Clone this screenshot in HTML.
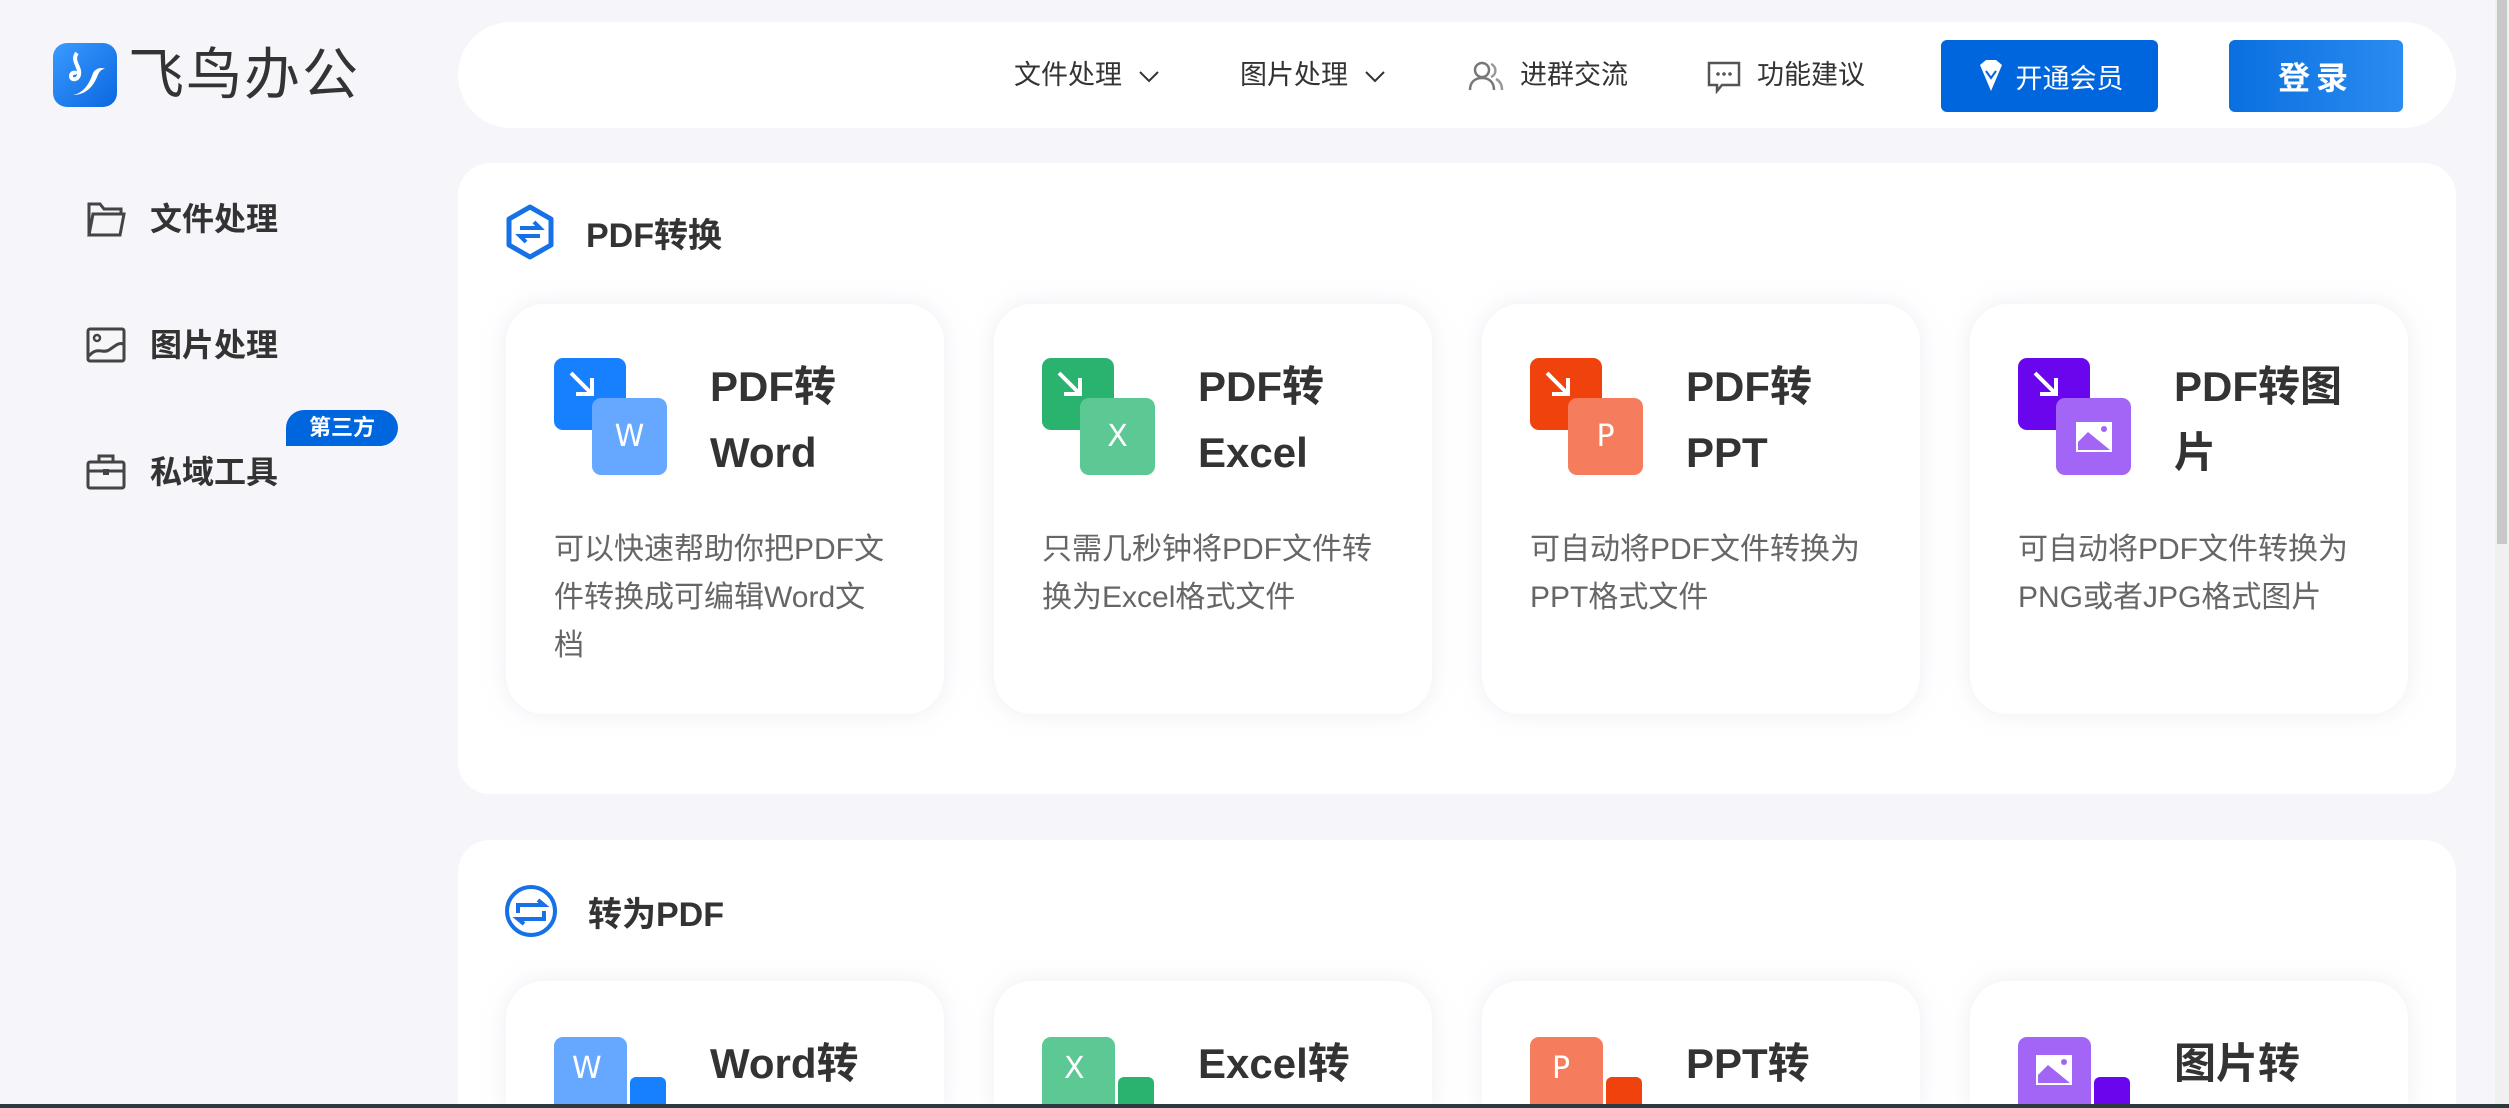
<!DOCTYPE html>
<html><head><meta charset="utf-8"><style>
*{margin:0;padding:0;box-sizing:border-box}
html,body{width:2509px;height:1108px;overflow:hidden}
body{background:#f5f5fa;font-family:"Liberation Sans","Noto Sans CJK SC",sans-serif;color:#333;position:relative}
.abs{position:absolute}
.hdr{left:458px;top:22px;width:1998px;height:106px;background:#fff;border-radius:53px}
.nav{top:55px;font-size:27px;color:#333;line-height:40px;white-space:nowrap}
.btn{top:40px;height:72px;border-radius:6px;color:#fff;font-size:27px;display:flex;align-items:center;justify-content:center}
.side{left:86px;font-size:32px;font-weight:bold;display:flex;align-items:center;line-height:40px}
.side svg{margin-right:24px}
.sec{left:458px;width:1998px;background:#fff;border-radius:32px}
.st{font-size:34px;font-weight:bold;display:flex;align-items:center}
.card{width:438px;height:410px;background:#fff;border-radius:38px;box-shadow:0 0 24px rgba(200,205,220,.35)}
.ic{position:absolute;left:48px;top:54px;width:115px;height:120px}
.ic .b{position:absolute;left:0;top:0;width:72px;height:72px;border-radius:9px}
.ic .f{position:absolute;left:38px;top:40px;width:75px;height:77px;border-radius:9px;color:#fff;font-size:30px;display:flex;align-items:center;justify-content:center;font-family:"DejaVu Sans",sans-serif}
.ic .b svg{position:absolute;left:14px;top:12px}
.ct{position:absolute;left:204px;top:50px;font-size:42px;font-weight:bold;line-height:66px;color:#333}
.cd{position:absolute;left:48px;top:222px;width:380px;font-size:30px;line-height:48px;color:#666;white-space:nowrap}
</style></head><body>
<div class="abs" style="left:53px;top:43px;width:64px;height:64px;border-radius:14px;background:linear-gradient(135deg,#3a9bff,#0a66e0)">
<svg width="64" height="64" viewBox="0 0 64 64"><path d="M24 10c-6 8 4 14 2 22-1 5-8 6-8 1 0-4 5-4 6-2" fill="none" stroke="#fff" stroke-width="4"/><path d="M20 52c10-2 16-10 20-22 3-5 8-6 12-4-4 0-6 3-8 8-4 10-12 18-24 18z" fill="#fff"/></svg></div>
<div class="abs" style="left:128px;top:40px;font-size:56px;color:#333;line-height:70px;letter-spacing:2px">飞鸟办公</div>
<div class="abs hdr"></div>
<div class="abs nav" style="left:1014px">文件处理 <svg width="22" height="14" viewBox="0 0 22 14" style="margin-left:8px"><path d="M2 2l9 9 9-9" fill="none" stroke="#333" stroke-width="2"/></svg></div>
<div class="abs nav" style="left:1240px">图片处理 <svg width="22" height="14" viewBox="0 0 22 14" style="margin-left:8px"><path d="M2 2l9 9 9-9" fill="none" stroke="#333" stroke-width="2"/></svg></div>
<svg class="abs" style="left:1466px;top:60px" width="40" height="32" viewBox="0 0 40 32"><circle cx="16" cy="10" r="7" fill="none" stroke="#777" stroke-width="2.5"/><path d="M4 30c0-8 5-12 12-12s12 4 12 12" fill="none" stroke="#777" stroke-width="2.5"/><path d="M25 4a7 7 0 0 1 0 13M30 19c4 2 6 6 6 11" fill="none" stroke="#999" stroke-width="2.5"/></svg>
<div class="abs nav" style="left:1520px">进群交流</div>
<svg class="abs" style="left:1706px;top:60px" width="36" height="34" viewBox="0 0 36 34"><path d="M3 3h30v22H16l-5 6v-6H3z" fill="none" stroke="#555" stroke-width="2.5"/><circle cx="12" cy="14" r="1.8" fill="#555"/><circle cx="18" cy="14" r="1.8" fill="#555"/><circle cx="24" cy="14" r="1.8" fill="#555"/></svg>
<div class="abs nav" style="left:1757px">功能建议</div>
<div class="abs btn" style="left:1941px;width:217px;background:#0066dd"><svg width="30" height="34" viewBox="0 0 30 34" style="margin-right:10px"><path d="M4 6l6-5h10l6 5-11 26z" fill="#fff"/><path d="M10 12l5 7 5-7" fill="none" stroke="#0066dd" stroke-width="2"/></svg>开通会员</div>
<div class="abs btn" style="left:2229px;width:174px;background:linear-gradient(90deg,#0a6fe0,#2a8cf0);font-size:32px;font-weight:bold;letter-spacing:6px">登录</div>
<div class="abs" style="left:2495px;top:0;width:14px;height:1108px;background:#f0f0f0"></div>
<div class="abs" style="left:2497px;top:0;width:10px;height:544px;background:#c8c8c8"></div>
<div class="abs side" style="top:199px"><svg width="40" height="38" viewBox="0 0 40 38"><path d="M3 35V4h11l4 5h17v5M3 35l4-21h31l-4 21z" fill="none" stroke="#444" stroke-width="3"/></svg>文件处理</div>
<div class="abs side" style="top:325px"><svg width="40" height="38" viewBox="0 0 40 38"><rect x="2" y="3" width="36" height="32" rx="2" fill="none" stroke="#444" stroke-width="3"/><circle cx="11" cy="12" r="3" fill="none" stroke="#444" stroke-width="2.5"/><path d="M3 30c8-10 14-2 20-6s10-8 14-6" fill="none" stroke="#444" stroke-width="3"/></svg>图片处理</div>
<div class="abs side" style="top:452px"><svg width="40" height="38" viewBox="0 0 40 38"><rect x="2" y="9" width="36" height="26" rx="2" fill="none" stroke="#444" stroke-width="3"/><path d="M13 9V3h14v6M2 18h36" fill="none" stroke="#444" stroke-width="3"/><rect x="17" y="16" width="6" height="6" fill="#444"/></svg>私域工具</div>
<div class="abs" style="left:286px;top:410px;width:112px;height:36px;background:#0066dd;border-radius:18px 18px 18px 0;color:#fff;font-size:22px;font-weight:bold;text-align:center;line-height:36px">第三方</div>
<div class="abs sec" style="top:163px;height:631px"></div>
<div class="abs st" style="left:504px;top:204px"><svg width="52" height="56" viewBox="0 0 52 56" style="margin-right:30px"><path d="M26 3l21 12v26L26 53 5 41V15z" fill="none" stroke="#1670e6" stroke-width="5" stroke-linejoin="round"/><path d="M16 24h20l-6-6M36 32H16l6 6" fill="none" stroke="#1670e6" stroke-width="4"/></svg>PDF转换</div>
<div class="abs card" style="left:506px;top:304px">
<div class="ic"><div class="b" style="background:#1780ff"><svg width="28" height="28" viewBox="0 0 28 28"><path d="M3 3l20 20M8 24h16V8" fill="none" stroke="#fff" stroke-width="4"/></svg></div><div class="f" style="background:#66a8ff">W</div></div>
<div class="ct">PDF转<br>Word</div><div class="cd">可以快速帮助你把PDF文<br>件转换成可编辑Word文<br>档</div></div>
<div class="abs card" style="left:994px;top:304px">
<div class="ic"><div class="b" style="background:#2ab26f"><svg width="28" height="28" viewBox="0 0 28 28"><path d="M3 3l20 20M8 24h16V8" fill="none" stroke="#fff" stroke-width="4"/></svg></div><div class="f" style="background:#5cc894">X</div></div>
<div class="ct">PDF转<br>Excel</div><div class="cd">只需几秒钟将PDF文件转<br>换为Excel格式文件</div></div>
<div class="abs card" style="left:1482px;top:304px">
<div class="ic"><div class="b" style="background:#f0420c"><svg width="28" height="28" viewBox="0 0 28 28"><path d="M3 3l20 20M8 24h16V8" fill="none" stroke="#fff" stroke-width="4"/></svg></div><div class="f" style="background:#f57d5e">P</div></div>
<div class="ct">PDF转<br>PPT</div><div class="cd">可自动将PDF文件转换为<br>PPT格式文件</div></div>
<div class="abs card" style="left:1970px;top:304px">
<div class="ic"><div class="b" style="background:#6a06ee"><svg width="28" height="28" viewBox="0 0 28 28"><path d="M3 3l20 20M8 24h16V8" fill="none" stroke="#fff" stroke-width="4"/></svg></div><div class="f" style="background:#a265f5"><svg width="40" height="34" viewBox="0 0 40 34"><path d="M2 2h36v30H2z" fill="#fff"/><path d="M4 22l10-10 22 18H4z" fill="#a265f5"/><circle cx="30" cy="9" r="3" fill="#a265f5"/></svg></div></div>
<div class="ct">PDF转图<br>片</div><div class="cd">可自动将PDF文件转换为<br>PNG或者JPG格式图片</div></div>
<div class="abs sec" style="top:840px;height:268px;border-radius:32px 32px 0 0"></div>
<div class="abs st" style="left:504px;top:883px"><svg width="54" height="56" viewBox="0 0 54 56" style="margin-right:30px"><circle cx="27" cy="28" r="24" fill="none" stroke="#1670e6" stroke-width="4"/><path d="M14 30v-8h26l-6-5M40 28v8H14l6 5" fill="none" stroke="#1670e6" stroke-width="4"/></svg>转为PDF</div>
<div class="abs card" style="left:506px;top:981px;height:127px;border-radius:38px 38px 0 0">
<div class="abs" style="left:48px;top:56px;width:73px;height:80px;border-radius:9px;background:#66a8ff;color:#fff;font-size:30px;font-family:'DejaVu Sans',sans-serif;padding:14px 0 0 18px">W</div>
<div class="abs" style="left:124px;top:96px;width:36px;height:40px;border-radius:6px;background:#1780ff"></div>
<div class="ct" style="top:50px">Word转</div></div>
<div class="abs card" style="left:994px;top:981px;height:127px;border-radius:38px 38px 0 0">
<div class="abs" style="left:48px;top:56px;width:73px;height:80px;border-radius:9px;background:#5cc894;color:#fff;font-size:30px;font-family:'DejaVu Sans',sans-serif;padding:14px 0 0 22px">X</div>
<div class="abs" style="left:124px;top:96px;width:36px;height:40px;border-radius:6px;background:#2ab26f"></div>
<div class="ct" style="top:50px">Excel转</div></div>
<div class="abs card" style="left:1482px;top:981px;height:127px;border-radius:38px 38px 0 0">
<div class="abs" style="left:48px;top:56px;width:73px;height:80px;border-radius:9px;background:#f57d5e;color:#fff;font-size:30px;font-family:'DejaVu Sans',sans-serif;padding:14px 0 0 22px">P</div>
<div class="abs" style="left:124px;top:96px;width:36px;height:40px;border-radius:6px;background:#f0420c"></div>
<div class="ct" style="top:50px">PPT转</div></div>
<div class="abs card" style="left:1970px;top:981px;height:127px;border-radius:38px 38px 0 0">
<div class="abs" style="left:48px;top:56px;width:73px;height:80px;border-radius:9px;background:#a265f5;padding:16px 0 0 16px"><svg width="40" height="34" viewBox="0 0 40 34"><path d="M2 2h36v30H2z" fill="#fff"/><path d="M4 22l10-10 22 18H4z" fill="#a265f5"/><circle cx="30" cy="9" r="3" fill="#a265f5"/></svg></div>
<div class="abs" style="left:124px;top:96px;width:36px;height:40px;border-radius:6px;background:#6a06ee"></div>
<div class="ct" style="top:50px">图片转</div></div>
<div class="abs" style="left:0;top:1104px;width:2509px;height:4px;background:#2b3a3e"></div>
</body></html>
